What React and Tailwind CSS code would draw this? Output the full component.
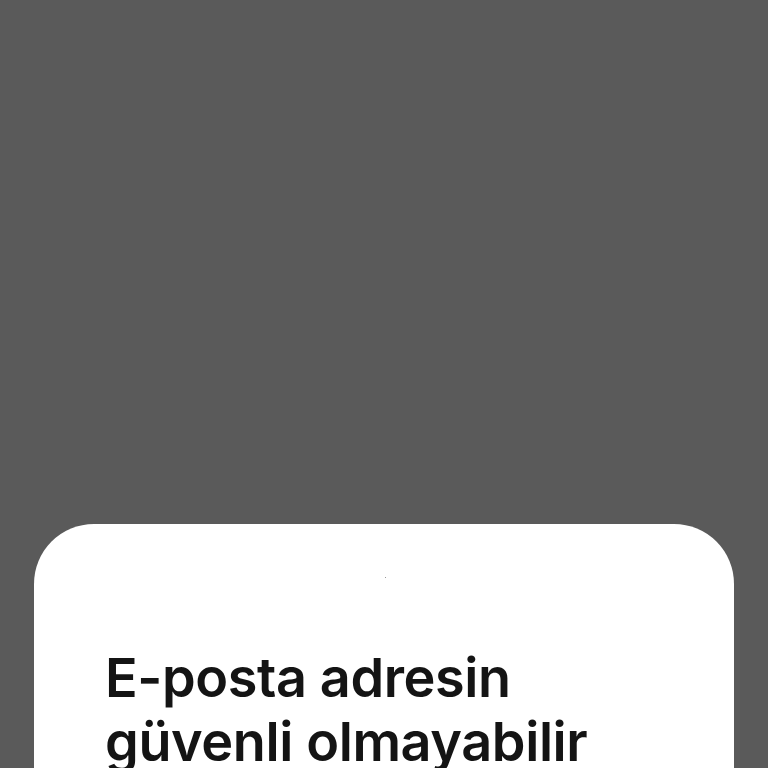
import React from "react";

export default function App() {
  return (
    <div className="h-screen overflow-hidden bg-[#5a5a5a] pt-[524px] px-[34px]">
      {/* bottom sheet */}
      <div className="h-[400px] w-[700px] rounded-t-[60px] bg-white pt-[53px]">
        <div className="ml-[351px] h-px w-px bg-[#9a9a9a]" />
        <h1
          className="mt-[68px] pl-[71px] text-[54px] font-semibold leading-[64px] tracking-[-0.4px] text-[#141414]"
          style={{ fontFamily: "Inter, 'Noto Sans', sans-serif" }}
        >
          E-posta adresin
          <br />
          güvenli olmayabilir
        </h1>
      </div>
    </div>
  );
}
